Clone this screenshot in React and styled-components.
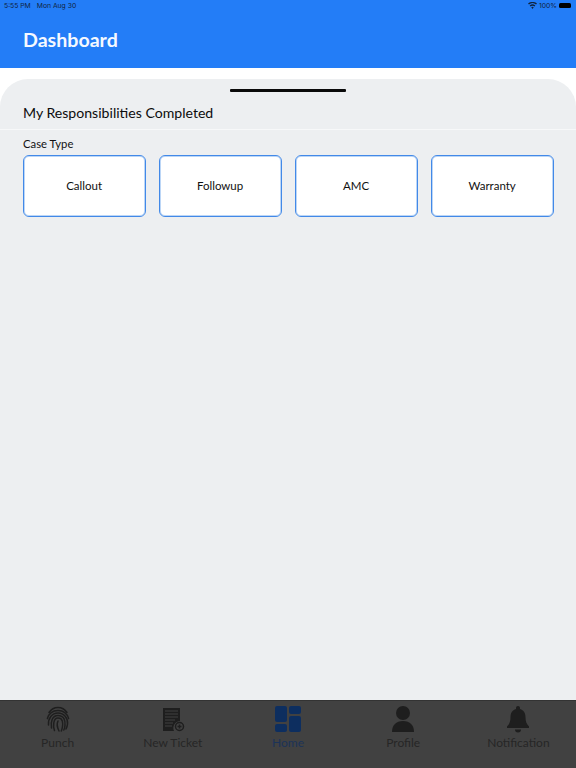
import React from 'react';
import styled, { createGlobalStyle } from 'styled-components';

const GlobalStyle = createGlobalStyle`
  html, body { margin: 0; padding: 0; background: #fff; }
  body { font-family: Lato, "Liberation Sans", sans-serif; }
`;

const Page = styled.div`
  width: 576px;
  height: 768px;
  display: flex;
  flex-direction: column;
  overflow: hidden;
  background: #fff;
`;

const Header = styled.header`
  height: 68px;
  flex: none;
  background: #237df7;
  display: flex;
  flex-direction: column;
`;

const StatusBar = styled.div`
  height: 11px;
  padding: 0 5px 0 4px;
  display: flex;
  align-items: center;
  justify-content: space-between;
  font-family: "Inter", "Liberation Sans", sans-serif;
  font-size: 6.8px;
  color: #10243f;
`;

const StatusGroup = styled.div`
  display: flex;
  align-items: center;
  gap: ${p => p.$gap}px;
`;

const Battery = styled.span`
  width: 12px;
  height: 5px;
  border-radius: 1.5px;
  background: #000;
`;

const Title = styled.h1`
  margin: 0;
  padding: 6px 0 0 23px;
  font-size: 19.6px;
  line-height: 46px;
  font-weight: 700;
  color: #f5f9ff;
`;

const Sheet = styled.main`
  flex: 1;
  margin-top: 11px;
  background: #edeff1;
  border-radius: 28px 28px 0 0;
  display: flex;
  flex-direction: column;
`;

const Handle = styled.div`
  width: 116px;
  height: 3px;
  margin: 10px auto 0;
  background: #0a0a0a;
  border-radius: 1px;
`;

const SheetTitle = styled.h2`
  margin: 0;
  padding: 9px 23px 0;
  height: 38px;
  box-sizing: border-box;
  font-size: 14.1px;
  line-height: 24px;
  font-weight: 400;
  color: #0c0c0c;
  border-bottom: 1px solid #f7f8f9;
`;

const SectionLabel = styled.div`
  padding: 6px 23px 0;
  font-size: 11.3px;
  line-height: 15px;
  color: #111;
`;

const CaseGrid = styled.div`
  display: grid;
  grid-template-columns: repeat(4, 123px);
  gap: 13px;
  padding: 4px 0 0 22.6px;
`;

const CaseCard = styled.button`
  height: 62px;
  padding: 0 0 2px;
  box-sizing: border-box;
  background: #fff;
  border: 1px solid #4289e8;
  box-shadow: inset 0 0 0 1px #bcd6f6;
  border-radius: 6px;
  font-family: inherit;
  font-size: 11.5px;
  color: #111;
`;

const TabBar = styled.nav`
  height: 68px;
  flex: none;
  background: #414141;
  border-top: 1px solid #333;
  box-sizing: border-box;
  display: grid;
  grid-template-columns: repeat(5, 1fr);
`;

const Tab = styled.div`
  display: flex;
  flex-direction: column;
  align-items: center;
  padding-top: 4px;
  font-size: 12px;
  line-height: 16px;
  color: ${p => (p.$active ? '#1c3358' : '#262626')};
`;

const TabIcon = styled.svg`
  width: 28px;
  height: 28px;
  margin-bottom: 2px;
  display: block;
`;

const FingerprintIcon = () => (
  <TabIcon viewBox="0 0 28 28" fill="none" stroke="#1e1e1e" strokeWidth="1.5" strokeLinecap="round">
    <path d="M5 7.5C7.5 3.8 10.5 2.5 14 2.5s6.5 1.3 9 5" />
    <path d="M3.4 13.5C5 8 9 5.4 14 5.4S23 8 24.6 13.5" />
    <path d="M4.5 20c-.6-6.5 3.500-12 9.500-12s10 5 9.500 11c-.1 2-.7 3.500-1.500 5" />
    <path d="M7.500 23c-1-6 .5-12.500 6.500-12.500s7.500 5 7 10c-.1 1.500-.5 3-1.200 4.500" />
    <path d="M10.500 25.500c-1.500-4-1.500-12.500 3.500-12.500s5 5 4.500 8.500c-.2 1.500-.6 3-1.200 4.500" />
    <path d="M14 16c-1.500 3 -.5 7 1 10" />
  </TabIcon>
);

const TicketIcon = () => (
  <TabIcon viewBox="0 0 28 28">
    <path fill="#1e1e1e" d="M4 3h17v13a7 7 0 0 0-6 10H4z" />
    <path stroke="#414141" strokeWidth="1" d="M6 6h13M6 9h13M6 12h13M6 15h10M6 18h8M6 21h7" />
    <circle cx="20.500" cy="21.500" r="4" fill="none" stroke="#1e1e1e" strokeWidth="1.500" />
    <path stroke="#1e1e1e" strokeWidth="1.500" d="M20.500 19.500v4M18.500 21.500h4" />
  </TabIcon>
);

const HomeIcon = () => (
  <TabIcon viewBox="0 0 28 28" fill="#0d2e5f">
    <rect x="1" y="1" width="12" height="16" rx="2" />
    <rect x="15" y="1" width="12" height="8" rx="2" />
    <rect x="1" y="19" width="12" height="8" rx="2" />
    <rect x="15" y="11" width="12" height="16" rx="2" />
  </TabIcon>
);

const ProfileIcon = () => (
  <TabIcon viewBox="0 0 28 28" fill="#1e1e1e">
    <circle cx="14" cy="8" r="7" />
    <path d="M3 27c0-7 4-11 11-11s11 4 11 11z" />
  </TabIcon>
);

const BellIcon = () => (
  <TabIcon viewBox="0 0 28 28" fill="#1e1e1e">
    <path d="M14 1c1.200 0 2 .8 2 2v1c3.800 1 5.500 4.200 5.500 8 0 4.500 1 7 3.500 9.500V23H3v-1.500C5.500 19 6.500 16.500 6.500 12c0-3.800 1.700-7 5.500-8V3c0-1.200.8-2 2-2z" />
    <path d="M11 24.500h6a3 3 0 0 1-6 0z" />
  </TabIcon>
);

const WifiIcon = () => (
  <svg width="9" height="7" viewBox="0 0 16 12" fill="#10243f">
    <path d="M8 12l-2.200-2.700a3.400 3.400 0 0 1 4.400 0zM4.500 7.800L3 6a7.600 7.600 0 0 1 10 0l-1.500 1.800a5.400 5.400 0 0 0-7 0zM1.700 4.400L0 2.600a12 12 0 0 1 16 0l-1.700 1.800a9.600 9.600 0 0 0-12.600 0z" />
  </svg>
);

const caseTypes = ['Callout', 'Followup', 'AMC', 'Warranty'];

const tabs = [
  { label: 'Punch', Icon: FingerprintIcon },
  { label: 'New Ticket', Icon: TicketIcon },
  { label: 'Home', Icon: HomeIcon, active: true },
  { label: 'Profile', Icon: ProfileIcon },
  { label: 'Notification', Icon: BellIcon },
];

const App = () => (
  <>
    <GlobalStyle />
    <Page>
      <Header>
        <StatusBar>
          <StatusGroup $gap={6}>
            <span>5:55 PM</span>
            <span>Mon Aug 30</span>
          </StatusGroup>
          <StatusGroup $gap={2}>
            <WifiIcon />
            <span>100%</span>
            <Battery />
          </StatusGroup>
        </StatusBar>
        <Title>Dashboard</Title>
      </Header>
      <Sheet>
        <Handle />
        <SheetTitle>My Responsibilities Completed</SheetTitle>
        <SectionLabel>Case Type</SectionLabel>
        <CaseGrid>
          {caseTypes.map(name => (
            <CaseCard key={name}>{name}</CaseCard>
          ))}
        </CaseGrid>
      </Sheet>
      <TabBar>
        {tabs.map(({ label, Icon, active }) => (
          <Tab key={label} $active={active}>
            <Icon />
            {label}
          </Tab>
        ))}
      </TabBar>
    </Page>
  </>
);

export default App;
